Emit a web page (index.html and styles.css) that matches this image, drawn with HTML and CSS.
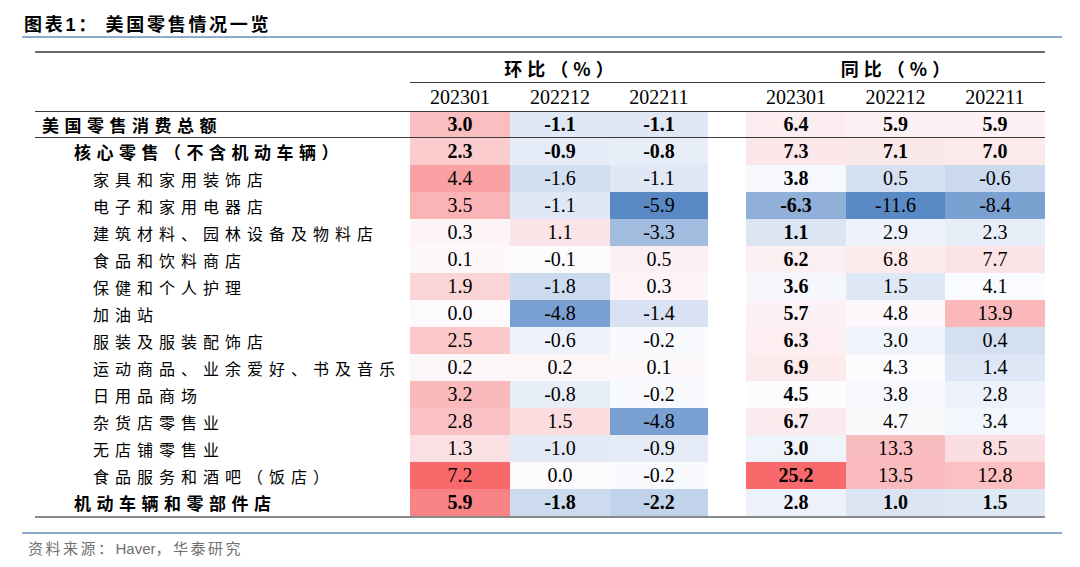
FILE: index.html
```html
<!DOCTYPE html>
<html lang="zh-CN">
<head>
<meta charset="utf-8">
<title>美国零售情况一览</title>
<link rel="stylesheet" href="styles.css">
</head>
<body>
<div class="title">图表<span class="lat">1</span>： 美国零售情况一览</div>

<div class="tbl">
  <div class="row grp">
    <div class="lab"></div>
    <div class="g">环比（%）</div>
    <div class="gapline"></div>
    <div class="g">同比（%）</div>
  </div>
  <div class="row yrs">
    <div class="lab"></div>
    <div class="y">202301</div><div class="y">202212</div><div class="y">202211</div>
    <div class="gap"></div>
    <div class="y">202301</div><div class="y">202212</div><div class="y">202211</div>
  </div>

  <div class="row d first">
    <div class="lab l0 b">美国零售消费总额</div>
    <div class="n h b">3.0</div><div class="n h b">-1.1</div><div class="n h b">-1.1</div>
    <div class="gap"></div>
    <div class="n t b">6.4</div><div class="n t b">5.9</div><div class="n t b">5.9</div>
  </div>
  <div class="row d">
    <div class="lab l1 b">核心零售（不含机动车辆）</div>
    <div class="n h b">2.3</div><div class="n h b">-0.9</div><div class="n h b">-0.8</div>
    <div class="gap"></div>
    <div class="n t b">7.3</div><div class="n t b">7.1</div><div class="n t b">7.0</div>
  </div>
  <div class="row d">
    <div class="lab l2">家具和家用装饰店</div>
    <div class="n h">4.4</div><div class="n h">-1.6</div><div class="n h">-1.1</div>
    <div class="gap"></div>
    <div class="n t b">3.8</div><div class="n t">0.5</div><div class="n t">-0.6</div>
  </div>
  <div class="row d">
    <div class="lab l2">电子和家用电器店</div>
    <div class="n h">3.5</div><div class="n h">-1.1</div><div class="n h">-5.9</div>
    <div class="gap"></div>
    <div class="n t b">-6.3</div><div class="n t">-11.6</div><div class="n t">-8.4</div>
  </div>
  <div class="row d">
    <div class="lab l2">建筑材料、园林设备及物料店</div>
    <div class="n h">0.3</div><div class="n h">1.1</div><div class="n h">-3.3</div>
    <div class="gap"></div>
    <div class="n t b">1.1</div><div class="n t">2.9</div><div class="n t">2.3</div>
  </div>
  <div class="row d">
    <div class="lab l2">食品和饮料商店</div>
    <div class="n h">0.1</div><div class="n h">-0.1</div><div class="n h">0.5</div>
    <div class="gap"></div>
    <div class="n t b">6.2</div><div class="n t">6.8</div><div class="n t">7.7</div>
  </div>
  <div class="row d">
    <div class="lab l2">保健和个人护理</div>
    <div class="n h">1.9</div><div class="n h">-1.8</div><div class="n h">0.3</div>
    <div class="gap"></div>
    <div class="n t b">3.6</div><div class="n t">1.5</div><div class="n t">4.1</div>
  </div>
  <div class="row d">
    <div class="lab l2">加油站</div>
    <div class="n h">0.0</div><div class="n h">-4.8</div><div class="n h">-1.4</div>
    <div class="gap"></div>
    <div class="n t b">5.7</div><div class="n t">4.8</div><div class="n t">13.9</div>
  </div>
  <div class="row d">
    <div class="lab l2">服装及服装配饰店</div>
    <div class="n h">2.5</div><div class="n h">-0.6</div><div class="n h">-0.2</div>
    <div class="gap"></div>
    <div class="n t b">6.3</div><div class="n t">3.0</div><div class="n t">0.4</div>
  </div>
  <div class="row d">
    <div class="lab l2">运动商品、业余爱好、书及音乐</div>
    <div class="n h">0.2</div><div class="n h">0.2</div><div class="n h">0.1</div>
    <div class="gap"></div>
    <div class="n t b">6.9</div><div class="n t">4.3</div><div class="n t">1.4</div>
  </div>
  <div class="row d">
    <div class="lab l2">日用品商场</div>
    <div class="n h">3.2</div><div class="n h">-0.8</div><div class="n h">-0.2</div>
    <div class="gap"></div>
    <div class="n t b">4.5</div><div class="n t">3.8</div><div class="n t">2.8</div>
  </div>
  <div class="row d">
    <div class="lab l2">杂货店零售业</div>
    <div class="n h">2.8</div><div class="n h">1.5</div><div class="n h">-4.8</div>
    <div class="gap"></div>
    <div class="n t b">6.7</div><div class="n t">4.7</div><div class="n t">3.4</div>
  </div>
  <div class="row d">
    <div class="lab l2">无店铺零售业</div>
    <div class="n h">1.3</div><div class="n h">-1.0</div><div class="n h">-0.9</div>
    <div class="gap"></div>
    <div class="n t b">3.0</div><div class="n t">13.3</div><div class="n t">8.5</div>
  </div>
  <div class="row d">
    <div class="lab l2">食品服务和酒吧（饭店）</div>
    <div class="n h">7.2</div><div class="n h">0.0</div><div class="n h">-0.2</div>
    <div class="gap"></div>
    <div class="n t b">25.2</div><div class="n t">13.5</div><div class="n t">12.8</div>
  </div>
  <div class="row d">
    <div class="lab l1 b">机动车辆和零部件店</div>
    <div class="n h b">5.9</div><div class="n h b">-1.8</div><div class="n h b">-2.2</div>
    <div class="gap"></div>
    <div class="n t b">2.8</div><div class="n t b">1.0</div><div class="n t b">1.5</div>
  </div>
</div>

<div class="foot">资料来源：<span class="lat">Haver</span>，华泰研究</div>

<script src="script.js"></script>
</body>
</html>
```

FILE: styles.css
```css
html, body {
  margin: 0;
  padding: 0;
  background: #ffffff;
}
body {
  width: 1080px;
  height: 567px;
  overflow: hidden;
  font-family: "Noto Sans CJK SC", "Liberation Sans", sans-serif;
  color: #000;
}

.title {
  margin-left: 22px;
  width: 1040px;
  box-sizing: border-box;
  padding: 10px 0 0 2px;
  line-height: 26px;
  height: 38px;
  border-bottom: 2px solid #8ea9cb;
  font-size: 18px;
  font-weight: 700;
  letter-spacing: 2.7px;
  white-space: pre;
}
.title .lat {
  font-family: "Liberation Sans", sans-serif;
  font-weight: 700;
}

.tbl {
  margin: 13px 0 0 35px;
  width: 1010px;
  border-top: 2px solid #6a6a6a;
  border-bottom: 2px solid #8a8a8a;
}

.row {
  display: grid;
  grid-template-columns: 375px 100px 100px 98px 38px 100px 99px 100px;
  box-sizing: border-box;
}

.grp {
  height: 30px;
}
.grp .g {
  grid-column: span 3;
  border-bottom: 1px solid #3a3a3a;
  display: flex;
  align-items: center;
  justify-content: center;
  padding-left: 5px;
  font-size: 18px;
  font-weight: 700;
  letter-spacing: 5px;
  box-sizing: border-box;
}
.grp .gapline {
  border-bottom: 1px solid #3a3a3a;
}

.yrs {
  height: 29px;
  border-bottom: 1px solid #3a3a3a;
}
.y {
  display: flex;
  align-items: center;
  justify-content: center;
  font-family: "Liberation Serif", serif;
  font-size: 20px;
}

.d {
  height: 27px;
}
.d.first {
  height: 26px;
  border-bottom: 1px solid #3a3a3a;
}

.lab {
  display: flex;
  align-items: center;
  white-space: nowrap;
}
.l0 {
  padding-left: 7px;
}
.l1 {
  padding-left: 39px;
}
.l2 {
  padding-left: 58px;
  font-size: 16px;
  letter-spacing: 6px;
}
.lab.b {
  font-size: 17px;
  font-weight: 700;
  letter-spacing: 5.5px;
}

.n {
  display: flex;
  align-items: center;
  justify-content: center;
  font-family: "Liberation Serif", serif;
  font-size: 20px;
  background: #fcfcff;
}
.n.b {
  font-weight: 700;
}

.foot {
  margin: 14px 0 0 22px;
  width: 1040px;
  border-top: 2px solid #8ea9cb;
  box-sizing: border-box;
  padding: 4px 0 0 6px;
  line-height: 20px;
  font-size: 15px;
  letter-spacing: 2.5px;
  color: #707070;
}
.foot .lat {
  font-family: "Liberation Sans", sans-serif;
  letter-spacing: 0;
}
```

FILE: script.js
```js
(function () {
  var LOW = [90, 138, 198];
  var MID = [252, 252, 255];
  var HIGH = [248, 105, 107];

  function mix(a, b, t) {
    return 'rgb(' + [0, 1, 2].map(function (i) {
      return Math.round(a[i] + (b[i] - a[i]) * t);
    }).join(',') + ')';
  }

  function paint(selector) {
    var cells = Array.prototype.slice.call(document.querySelectorAll(selector));
    var vals = cells.map(function (c) { return parseFloat(c.textContent); });
    var sorted = vals.slice().sort(function (a, b) { return a - b; });
    var n = sorted.length;
    var pos = (n - 1) * 0.5;
    var lo = Math.floor(pos), hi = Math.ceil(pos);
    var mid = sorted[lo] + (sorted[hi] - sorted[lo]) * (pos - lo);
    var min = sorted[0], max = sorted[n - 1];
    cells.forEach(function (c, i) {
      var v = vals[i], col;
      if (v >= mid) {
        col = mix(MID, HIGH, max === mid ? 0 : (v - mid) / (max - mid));
      } else {
        col = mix(MID, LOW, (mid - v) / (mid - min));
      }
      c.style.background = col;
    });
  }

  paint('.n.h');
  paint('.n.t');
})();
```
